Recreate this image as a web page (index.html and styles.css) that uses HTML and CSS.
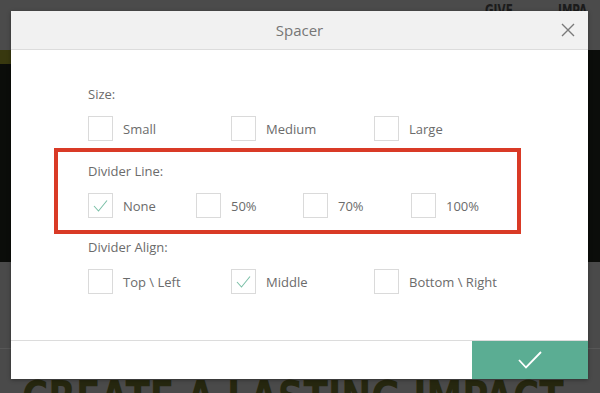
FILE: index.html
```html
<!DOCTYPE html>
<html>
<head>
<meta charset="utf-8">
<link rel="stylesheet" href="styles.css">
</head>
<body>
<div class="page">
  <div class="topbar">
    <span class="nav">GIVE</span>
    <span class="nav">IMPA</span>
  </div>
  <div class="olive"><div class="olive-left"></div></div>
  <div class="hero"></div>
  <div class="lower">
    <div class="rule"></div>
    <div class="headline">CREATE A LASTING IMPACT</div>
  </div>
</div>

<div class="modal">
  <div class="modal-head">
    <span class="title">Spacer</span>
    <svg class="close" width="14" height="14" viewBox="0 0 14 14"><path d="M1 1 L13 13 M13 1 L1 13" stroke="#7a7a7a" stroke-width="1.4" fill="none"/></svg>
  </div>
  <div class="modal-body">
    <div class="section">
      <div class="label">Size:</div>
      <div class="row wide">
        <div class="opt"><span class="box"></span><span>Small</span></div>
        <div class="opt"><span class="box"></span><span>Medium</span></div>
        <div class="opt"><span class="box"></span><span>Large</span></div>
      </div>
    </div>
    <div class="section highlight">
      <div class="label">Divider Line:</div>
      <div class="row narrow">
        <div class="opt"><span class="box"><svg width="23" height="23" viewBox="0 0 23 23"><path d="M5 12 L9.5 17 L18 6.5" stroke="#7cc0a8" stroke-width="1.1" fill="none"/></svg></span><span>None</span></div>
        <div class="opt"><span class="box"></span><span>50%</span></div>
        <div class="opt"><span class="box"></span><span>70%</span></div>
        <div class="opt"><span class="box"></span><span>100%</span></div>
      </div>
    </div>
    <div class="section last">
      <div class="label">Divider Align:</div>
      <div class="row wide">
        <div class="opt"><span class="box"></span><span>Top \ Left</span></div>
        <div class="opt"><span class="box"><svg width="23" height="23" viewBox="0 0 23 23"><path d="M5 12 L9.5 17 L18 6.5" stroke="#7cc0a8" stroke-width="1.1" fill="none"/></svg></span><span>Middle</span></div>
        <div class="opt"><span class="box"></span><span>Bottom \ Right</span></div>
      </div>
    </div>
  </div>
  <div class="modal-foot">
    <div class="ok">
      <svg width="26" height="20" viewBox="0 0 26 20"><path d="M2 10 L9 17.5 L24 2" stroke="#ffffff" stroke-width="1.8" fill="none"/></svg>
    </div>
  </div>
</div>
</body>
</html>
```

FILE: styles.css
```css
* { box-sizing: border-box; }
html, body {
  margin: 0;
  padding: 0;
  width: 600px;
  height: 393px;
  overflow: hidden;
  background: #4a4a4a;
}
.page {
  width: 600px;
  height: 393px;
  display: flex;
  flex-direction: column;
  overflow: hidden;
}
.topbar {
  flex: none;
  height: 50px;
  background: #4b4b4b;
  display: flex;
  justify-content: flex-end;
  gap: 34px;
  padding: 2px 0 0 0;
  overflow: hidden;
}
.nav {
  font-family: "DejaVu Sans", sans-serif;
  font-weight: bold;
  font-size: 15px;
  color: #1c1c1c;
  transform: scaleX(0.7);
  transform-origin: left top;
  display: inline-block;
}
.olive {
  flex: none;
  height: 14px;
  background: #0b0d0a;
  display: flex;
}
.olive-left {
  width: 300px;
  background: #38380f;
}
.hero {
  flex: none;
  height: 198px;
  background: #0b0d0a;
}
.lower {
  flex: 1;
  min-height: 0;
  background: #4a4a4a;
  overflow: hidden;
}
.rule {
  margin-top: 86px;
  height: 1px;
  background: #575757;
}
.headline {
  margin-top: 27px;
  margin-left: 22px;
  font-family: "DejaVu Sans", sans-serif;
  font-weight: bold;
  font-size: 44px;
  line-height: 44px;
  color: #26270f;
  white-space: nowrap;
  transform: scaleX(0.815);
  transform-origin: left top;
}

.modal {
  position: absolute;
  left: 11px;
  top: 11px;
  width: 577px;
  height: 368px;
  background: #ffffff;
  box-shadow: 0 1px 4px rgba(0,0,0,0.35);
  display: flex;
  flex-direction: column;
  font-family: "Open Sans", "Liberation Sans", sans-serif;
  color: #6b6b6b;
}
.modal-head {
  height: 39px;
  background: #f1f1f1;
  border-bottom: 1px solid #dcdcdc;
  display: flex;
  align-items: center;
  justify-content: center;
  position: relative;
}
.title {
  font-size: 15px;
  color: #767676;
}
.close {
  position: absolute;
  right: 13px;
  top: 12px;
}
.modal-body {
  flex: 1;
  padding: 35px 0 0 77px;
  display: flex;
  flex-direction: column;
}
.section {
  display: flex;
  flex-direction: column;
  gap: 13px;
}
.label {
  font-size: 13px;
  line-height: 18px;
  height: 18px;
}
.row {
  display: grid;
  height: 25px;
}
.row.wide { grid-template-columns: 143px 143px 143px; }
.row.narrow { grid-template-columns: 108px 107px 108px 108px; }
.opt {
  display: flex;
  align-items: center;
  gap: 10px;
  font-size: 13px;
  color: #6b6b6b;
}
.box {
  width: 25px;
  height: 25px;
  border: 1px solid #dadada;
  display: inline-flex;
  align-items: center;
  justify-content: center;
  flex: none;
}
.highlight {
  margin: 7px 0 0 -34px;
  width: 467px;
  border: 4px solid #d93a26;
  padding: 10px 0 12px 30px;
}
.last {
  margin-top: 4px;
}
.modal-foot {
  height: 39px;
  border-top: 1px solid #dcdcdc;
  display: flex;
  justify-content: flex-end;
}
.ok {
  width: 116px;
  height: 38px;
  background: #5bad93;
  display: flex;
  align-items: center;
  justify-content: center;
}
```
